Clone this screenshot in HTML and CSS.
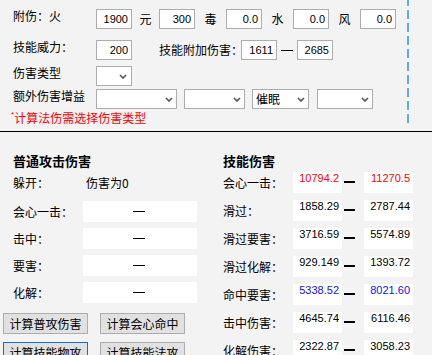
FILE: index.html
```html
<!DOCTYPE html>
<html lang="zh-CN">
<head>
    <meta charset="UTF-8">
    <meta name="viewport" content="width=device-width, initial-scale=1.0">
    <title>伤害计算</title>
    <link rel="stylesheet" href="styles.css">
</head>
<body>
    <div class="top">
        <div class="form">
            <div class="row">
                <span class="lbl">附伤：火</span>
                <div class="tb">1900</div>
                <span class="unit u1">元</span>
                <div class="tb">300</div>
                <span class="unit">毒</span>
                <div class="tb">0.0</div>
                <span class="unit">水</span>
                <div class="tb">0.0</div>
                <span class="unit">风</span>
                <div class="tb">0.0</div>
            </div>
            <div class="row r2">
                <span class="lbl">技能威力：</span>
                <div class="tb">200</div>
                <span class="mid">技能附加伤害：</span>
                <div class="tb">1611</div>
                <span class="tdash"><i></i></span>
                <div class="tb">2685</div>
            </div>
            <div class="row r3">
                <span class="lbl">伤害类型</span>
                <div class="cb w36"><span></span><svg width="8" height="5" viewBox="0 0 8 5"><polyline points="1,1 4,4 7,1" /></svg></div>
            </div>
            <div class="row r4">
                <span class="lbl">额外伤害增益</span>
                <div class="cb w81"><span></span><svg width="8" height="5" viewBox="0 0 8 5"><polyline points="1,1 4,4 7,1" /></svg></div>
                <div class="cb w61 ml7"><span></span><svg width="8" height="5" viewBox="0 0 8 5"><polyline points="1,1 4,4 7,1" /></svg></div>
                <div class="cb w57 ml7"><span>催眠</span><svg width="8" height="5" viewBox="0 0 8 5"><polyline points="1,1 4,4 7,1" /></svg></div>
                <div class="cb w56 ml8"><span></span><svg width="8" height="5" viewBox="0 0 8 5"><polyline points="1,1 4,4 7,1" /></svg></div>
            </div>
            <div class="note"><span class="star">*</span>计算法伤需选择伤害类型</div>
        </div>
        <div class="vsep"></div>
    </div>

    <div class="bottom">
        <div class="col left">
            <div class="hd">普通攻击伤害</div>
            <div class="dodge"><span class="lbl2">躲开：</span><span class="dv">伤害为0</span></div>
            <div class="vrow first">
                <span class="lbl2">会心一击：</span>
                <div class="pair"><div class="vb"></div><span class="ldash"><i></i></span><div class="vb"></div></div>
            </div>
            <div class="vrow">
                <span class="lbl2">击中：</span>
                <div class="pair"><div class="vb"></div><span class="ldash"><i></i></span><div class="vb"></div></div>
            </div>
            <div class="vrow">
                <span class="lbl2">要害：</span>
                <div class="pair"><div class="vb"></div><span class="ldash"><i></i></span><div class="vb"></div></div>
            </div>
            <div class="vrow">
                <span class="lbl2">化解：</span>
                <div class="pair"><div class="vb"></div><span class="ldash"><i></i></span><div class="vb"></div></div>
            </div>
            <div class="btns">
                <button class="btn">计算普攻伤害</button>
                <button class="btn">计算会心命中</button>
            </div>
            <div class="btns b2">
                <button class="btn focus">计算技能物攻</button>
                <button class="btn">计算技能法攻</button>
            </div>
        </div>

        <div class="col right">
            <div class="hd">技能伤害</div>
            <div class="vrow">
                <span class="lbl2">会心一击：</span>
                <div class="vb red">10794.2</div><span class="under"><i></i></span><div class="vb red">11270.5</div>
            </div>
            <div class="vrow">
                <span class="lbl2">滑过：</span>
                <div class="vb">1858.29</div><span class="under"><i></i></span><div class="vb">2787.44</div>
            </div>
            <div class="vrow">
                <span class="lbl2">滑过要害：</span>
                <div class="vb">3716.59</div><span class="under"><i></i></span><div class="vb">5574.89</div>
            </div>
            <div class="vrow">
                <span class="lbl2">滑过化解：</span>
                <div class="vb">929.149</div><span class="under"><i></i></span><div class="vb">1393.72</div>
            </div>
            <div class="vrow">
                <span class="lbl2">命中要害：</span>
                <div class="vb blue">5338.52</div><span class="under"><i></i></span><div class="vb blue">8021.60</div>
            </div>
            <div class="vrow">
                <span class="lbl2">击中伤害：</span>
                <div class="vb">4645.74</div><span class="under"><i></i></span><div class="vb">6116.46</div>
            </div>
            <div class="vrow">
                <span class="lbl2">化解伤害：</span>
                <div class="vb">2322.87</div><span class="under"><i></i></span><div class="vb">3058.23</div>
            </div>
        </div>
    </div>
</body>
</html>
```

FILE: styles.css
```css
html, body {
    margin: 0;
    padding: 0;
    background: #f3f3f3;
    color: #000;
    font-family: "Noto Sans CJK SC", "Microsoft YaHei", sans-serif;
    font-size: 12px;
    line-height: 16px;
    width: 432px;
    height: 355px;
    overflow: hidden;
}
*, *::before, *::after {
    box-sizing: border-box;
}

/* top form */
.top {
    display: flex;
    align-items: flex-start;
    height: 132px;
    border-bottom: 1px solid #000;
}
.form {
    width: 407px;
    padding: 9px 0 0 13px;
}
.vsep {
    width: 2px;
    height: 123px;
    background:
        repeating-linear-gradient(to bottom, transparent 0 6px, #f3f3f3 6px 10px, transparent 10px 13px),
        linear-gradient(to right, #c3925c 50%, #5eaaf2 50%);
}
.row {
    display: flex;
    align-items: flex-start;
    height: 20px;
}
.r2 {
    margin-top: 11px;
}
.r3 {
    margin-top: 6px;
}
.r4 {
    margin-top: 3px;
}
.lbl {
    width: 83px;
    margin-top: -1px;
    white-space: nowrap;
}
.tb {
    width: 36px;
    height: 20px;
    border: 1px solid #adadad;
    background: #fff;
    font-family: "Liberation Sans", Arial, sans-serif;
    font-size: 11px;
    line-height: 18px;
    text-align: right;
    padding-right: 3px;
}
.unit {
    width: 31px;
    align-self: center;
    text-align: center;
}
.unit.u1 {
    width: 27px;
}
.mid {
    margin-left: 27px;
    width: 82px;
    align-self: center;
    white-space: nowrap;
}
.tdash {
    width: 20px;
    height: 20px;
    display: flex;
    justify-content: center;
    align-items: center;
}
.tdash i {
    display: block;
    width: 12px;
    height: 1px;
    background: #000;
}
.cb {
    height: 20px;
    border: 1px solid #adadad;
    background: #fff;
    display: flex;
    align-items: center;
    justify-content: space-between;
    padding: 0 3px 0 3px;
}
.cb svg polyline {
    fill: none;
    stroke: #5a5a5a;
    stroke-width: 1.7;
}
.w36 { width: 36px; padding-right: 4px; }
.w81 { width: 81px; }
.w61 { width: 61px; }
.w57 { width: 57px; }
.w56 { width: 56px; }
.ml7 { margin-left: 7px; }
.ml8 { margin-left: 8px; }
.note {
    margin-top: 1px;
    margin-left: -2px;
    color: #ff0000;
    white-space: nowrap;
}
.star {
    font-family: "Liberation Sans", Arial, sans-serif;
    font-size: 8px;
    vertical-align: top;
    line-height: 10px;
}

/* results */
.bottom {
    display: flex;
    padding-top: 20px;
}
.col {
    display: flex;
    flex-direction: column;
}
.col.left {
    width: 223px;
    padding-left: 13px;
}
.col.right {
    flex: 1;
}
.hd {
    font-size: 13px;
    font-weight: bold;
    line-height: 17px;
    white-space: nowrap;
}
.dodge {
    display: flex;
    margin-top: 6px;
}
.dv {
    margin-left: 3px;
}
.lbl2 {
    width: 70px;
    white-space: nowrap;
}
.vrow {
    display: flex;
    align-items: center;
    height: 21px;
    margin-top: 7px;
}
.left .vrow {
    margin-top: 6px;
}
.left .vrow.first {
    margin-top: 10px;
}
.right .vrow:nth-child(2) {
    margin-top: 3px;
}
.pair {
    display: flex;
    background: #fff;
    height: 21px;
}
.vb {
    width: 49px;
    height: 21px;
    background: #fff;
    font-family: "Liberation Sans", Arial, sans-serif;
    font-size: 11px;
    line-height: 13px;
    text-align: right;
    padding-right: 3px;
    white-space: nowrap;
}
.vb.red {
    color: #ff0000;
}
.vb.blue {
    color: #1010ee;
}
.ldash {
    width: 16px;
    padding: 10px 0 0 1px;
}
.ldash i,
.under i {
    display: block;
    width: 12px;
    height: 1px;
    background: #000;
}
.under {
    width: 22px;
    height: 21px;
    padding: 9px 0 0 2px;
}
.under i {
    width: 11px;
    height: 2px;
}
.btns {
    display: flex;
    gap: 12px;
    margin-top: 10px;
    margin-left: -10px;
}
.btns.b2 {
    margin-top: 8px;
}
.btn {
    width: 85px;
    height: 21px;
    padding: 0;
    border: 1px solid #adadad;
    background: #e1e1e1;
    font-family: "Noto Sans CJK SC", "Microsoft YaHei", sans-serif;
    font-size: 12px;
    line-height: 17px;
    color: #000;
}
.btn.focus {
    border-color: #0078d7;
}
```
